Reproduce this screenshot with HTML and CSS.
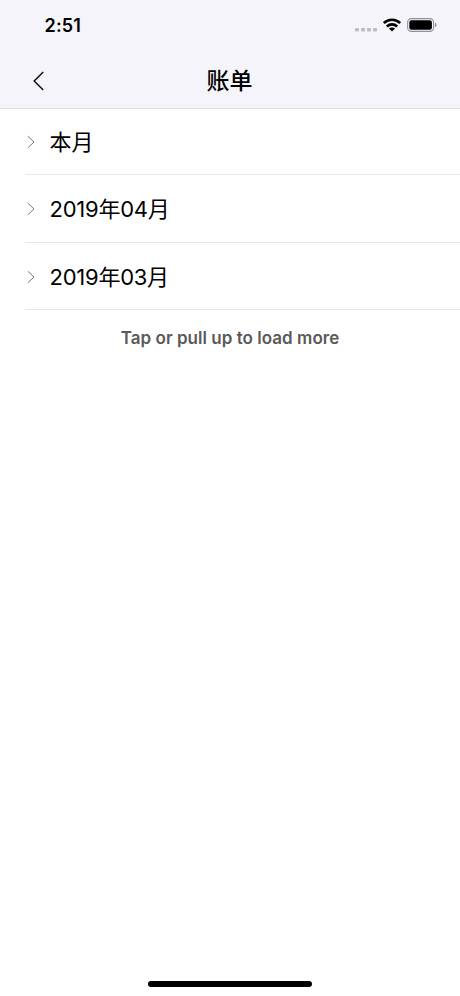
FILE: index.html
```html
<!DOCTYPE html>
<html lang="zh-CN">
<head>
<meta charset="utf-8">
<meta name="viewport" content="width=device-width">
<title>账单</title>
<link rel="stylesheet" href="styles.css">
</head>
<body>
<div class="screen">
  <header class="top">
    <div class="status">
      <span class="time">2:51</span>
      <div class="indicators">
        <svg class="signal" width="22" height="4" viewBox="0 0 22 4"><g fill="#bdbcc1"><rect x="0" y="0" width="4" height="3.5" rx="1"/><rect x="6" y="0" width="4" height="3.5" rx="1"/><rect x="12" y="0" width="4" height="3.5" rx="1"/><rect x="18" y="0" width="4" height="3.5" rx="1"/></g></svg>
        <svg class="wifi" width="18" height="14" viewBox="0 0 18 14"><g fill="none" stroke="#000" stroke-width="2.7"><path d="M.9 5.1C5.5.6 12.5.6 17.1 5.1"/><path d="M3.9 8.5c2.9-2.8 7.3-2.8 10.2 0"/></g><path d="M9 13.6 5.9 10.6c1.7-1.6 4.5-1.6 6.2 0z"/></svg>
        <svg class="battery" width="30" height="14" viewBox="0 0 30 14"><rect x=".6" y=".6" width="26" height="12.8" rx="3.8" fill="none" stroke="#929196" stroke-width="1.1"/><rect x="2.3" y="2.3" width="22.6" height="9.4" rx="2.2"/><path d="M28 4.8c2 .7 2 3.7 0 4.4z" fill="#929196"/></svg>
      </div>
    </div>
    <nav class="nav">
      <svg class="back" width="12" height="20" viewBox="0 0 12 20"><path d="M10.2 1 1.2 10l9 9" fill="none" stroke="#111" stroke-width="1.5"/></svg>
      <h1 class="title">账单</h1>
    </nav>
  </header>
  <main class="list">
    <div class="row"><svg class="chevron" width="8" height="14" viewBox="0 0 8 14"><path d="M.8 1.2 7 7 .8 12.8" fill="none" stroke="#777" stroke-width="1"/></svg><span class="label">本月</span></div>
    <div class="row"><svg class="chevron" width="8" height="14" viewBox="0 0 8 14"><path d="M.8 1.2 7 7 .8 12.8" fill="none" stroke="#777" stroke-width="1"/></svg><span class="label date">2019年04月</span></div>
    <div class="row"><svg class="chevron" width="8" height="14" viewBox="0 0 8 14"><path d="M.8 1.2 7 7 .8 12.8" fill="none" stroke="#777" stroke-width="1"/></svg><span class="label date">2019年03月</span></div>
  </main>
  <div class="more">Tap or pull up to load more</div>
  <div class="home"></div>
</div>
</body>
</html>
```
FILE: styles.css
```css
* { box-sizing: border-box; }
body { margin: 0; background: #fff; color: #000; font-family: Inter, "Noto Sans CJK SC", sans-serif; }
svg { display: block; flex: none; }
.screen { display: flex; flex-direction: column; height: 996px; overflow: hidden; }
.top { height: 109px; background: #f5f4fa; border-bottom: 1px solid #dfdee2; }
.status { display: flex; justify-content: space-between; height: 54px; padding: 14px 23.5px 0 44.5px; }
.time { font-size: 18px; line-height: 24px; font-weight: 600; letter-spacing: .2px; }
.indicators { display: flex; height: 22px; align-items: center; }
.signal { margin: 9px 5.5px 0 0; }
.wifi { margin-right: 6px; }
.nav { display: grid; grid-template-columns: 68px 1fr 68px; align-items: center; height: 54px; }
.back { margin-left: 33px; }
.title { margin: 0 1px 0 0; text-align: center; font-size: 23px; line-height: 34px; font-weight: 500; }
.list { margin-top: -1px; padding-left: 25px; }
.row { display: flex; align-items: center; height: 67.4px; padding: 1.4px 0 0 2px; border-bottom: 1px solid #e7e7e7; }
.label { margin-left: 14.5px; font-size: 22px; line-height: 32px; }
.date { letter-spacing: -.25px; }
.more { margin-top: 17px; text-align: center; color: #5a5a5a; font-size: 17px; line-height: 22px; font-weight: 600; letter-spacing: .03px; }
.home { width: 164px; height: 6px; margin: auto auto 9px; border-radius: 3px; background: #000; }
```
